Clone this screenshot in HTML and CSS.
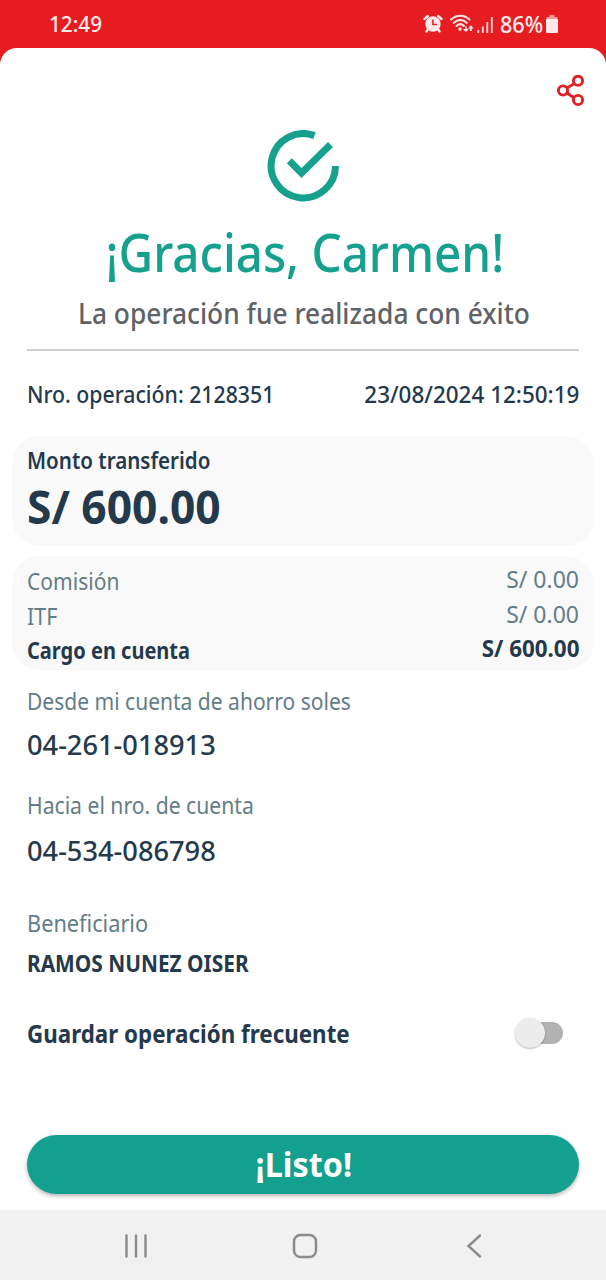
FILE: index.html
```
<!DOCTYPE html>
<html lang="es">
<head>
<meta charset="utf-8">
<title>Operación realizada</title>
<link rel="stylesheet" href="styles.css">
</head>
<body>
<div class="screen">
  <header class="status">
    <span class="text time">12:49</span>
    <div class="status-icons">
      <svg class="alarm" viewBox="0 0 20 20" width="20" height="20">
        <circle cx="10" cy="10" r="7.700" fill="#ffe9e9"/>
        <path d="M1.500 5L4.800 2M18.500 5L15.200 2M4.800 15.500L3.500 17.500M15.200 15.500L16.500 17.500" stroke="#ffe9e9" stroke-width="2.400" stroke-linecap="round" fill="none"/>
        <path d="M9.900 5.500v5h4" stroke="#e61c21" stroke-width="1.500" fill="none"/>
      </svg>
      <svg class="wifi" viewBox="0 0 24 20" width="24" height="20">
        <path d="M1 5.600C6.200 .300 14.300 .300 19.500 5.600M3.700 8.900C7.500 5 13 5 16.800 8.900M6.600 12C8.800 9.800 11.700 9.800 13.900 12" fill="none" stroke="#ffe9e9" stroke-width="2" stroke-linecap="round"/>
        <circle cx="10" cy="15" r="1.700" fill="#ffe9e9"/>
        <path d="M15 12.500h1.800v2.500h1.900L15.900 18.200 13 15H15zM19.900 17h1.800v-2.500h1.900L20.800 11.300 18 14.500h1.900z" fill="#ffe9e9"/>
      </svg>
      <svg class="signal" viewBox="0 0 17 18" width="17" height="18">
        <path d="M1.300 14v3M5.800 10.500V17M10.300 6V17M14.800 1V17" stroke="#ffe0e0" stroke-width="1.800" fill="none"/>
      </svg>
      <span class="text percent">86%</span>
      <svg class="battery" viewBox="0 0 12 18" width="12" height="18">
        <path d="M3.500 0h5v2h3v2.500H.500V2h3z" fill="#f39a9c"/>
        <rect y="4" width="12" height="14" rx="1" fill="#ffe9e9"/>
      </svg>
    </div>
  </header>

  <main class="sheet">
    <div class="toolbar">
      <svg class="share" viewBox="0 0 28 32" width="28" height="32" fill="none" stroke="#de2027" stroke-width="2.900">
        <path d="M9.700 13L17.200 8.700M10 18L17 22.700"/>
        <circle cx="6" cy="15.500" r="4.600"/><circle cx="21" cy="5.800" r="4.600"/><circle cx="21" cy="25" r="4.600"/>
      </svg>
    </div>
    <svg class="done" viewBox="0 0 72 72" width="72" height="72" fill="none" stroke="#16a08e" stroke-width="7">
      <path d="M47.500 5.600A32.200 32.200 0 1 0 68.500 36"/>
      <path d="M22.300 30.800L34.500 43L63.500 14.500"/>
    </svg>
    <h1 class="title"><span class="text">¡Gracias, Carmen!</span></h1>
    <p class="subtitle"><span class="text">La operación fue realizada con éxito</span></p>
    <hr class="divider">
    <div class="meta">
      <span class="text number">Nro. operación: 2128351</span>
      <span class="text date">23/08/2024 12:50:19</span>
    </div>

    <section class="card amount-card">
      <div class="label"><span class="text">Monto transferido</span></div>
      <div class="amount"><span class="text">S/ 600.00</span></div>
    </section>

    <section class="card charges">
      <div class="names">
        <span class="text commission">Comisión</span>
        <span class="text itf">ITF</span>
        <span class="text charge">Cargo en cuenta</span>
      </div>
      <div class="values">
        <span class="text">S/ 0.00</span>
        <span class="text">S/ 0.00</span>
        <span class="text total">S/ 600.00</span>
      </div>
    </section>

    <section class="field origin">
      <span class="text caption">Desde mi cuenta de ahorro soles</span>
      <span class="text account">04-261-018913</span>
    </section>
    <section class="field target">
      <span class="text caption">Hacia el nro. de cuenta</span>
      <span class="text account">04-534-086798</span>
    </section>
    <section class="field payee">
      <span class="text caption">Beneficiario</span>
      <span class="text name">RAMOS NUNEZ OISER</span>
    </section>

    <div class="save">
      <span class="text">Guardar operación frecuente</span>
      <span class="switch"><span class="knob"></span></span>
    </div>
    <button class="submit"><span class="text">¡Listo!</span></button>
  </main>

  <nav class="nav">
    <svg viewBox="0 0 24 26" width="24" height="26" stroke="#8b8b8b" stroke-width="2.400" stroke-linecap="round"><path d="M2.500 2.500v21M12 2.500v21M21.500 2.500v21"/></svg>
    <svg viewBox="0 0 26 26" width="26" height="26" fill="none" stroke="#8b8b8b" stroke-width="2.500"><rect x="2" y="2" width="22" height="22" rx="6.500"/></svg>
    <svg viewBox="0 0 24 26" width="24" height="26" fill="none" stroke="#8b8b8b" stroke-width="2.400" stroke-linecap="round"><path d="M18 2.500L6.500 13L18 23.500"/></svg>
  </nav>
</div>
</body>
</html>
```
FILE: styles.css
```
* { box-sizing: border-box; }
body { margin: 0; background: #e61c21; color: #25394c; font-family: "Noto Sans", sans-serif; font-weight: 500; }
h1, p { margin: 0; font-weight: inherit; }

.screen { width: 606px; height: 1280px; display: flex; flex-direction: column; background: #e61c21; overflow: hidden; }
.text { display: block; width: max-content; white-space: pre; transform: scaleX(var(--w, 1)); transform-origin: left; }

.status { height: 48px; flex: none; display: flex; justify-content: space-between; padding: 0 48px 0 49px; color: #ffecec; }
.time { font-size: 22.5px; line-height: 48px; --w: .92; }
.status-icons { display: flex; align-items: flex-start; }
.alarm { margin-top: 14px; }
.wifi { margin: 14px 0 0 7px; }
.signal { margin: 16px 0 0 3px; }
.percent { font-size: 23px; line-height: 48px; margin-left: 6px; --w: .94; }
.battery { margin: 15px 0 0 0; }

.sheet { height: 1162px; flex: none; display: flex; flex-direction: column; background: #fff; border-radius: 17px 17px 0 0; padding: 27px 12px 0; }
.toolbar { display: flex; justify-content: flex-end; height: 55px; padding-right: 9px; }
.done { align-self: center; }
.title { display: flex; justify-content: center; margin-top: 20px; padding-left: 4px; font-size: 52px; line-height: 60px; color: #16a08e; }
.title .text, .subtitle .text, .submit .text { transform-origin: center; }
.title .text { --w: .915; }
.subtitle { display: flex; justify-content: center; margin-top: 13px; padding-left: 1px; font-size: 29px; line-height: 36px; color: #616266; }
.subtitle .text { --w: .908; }
.divider { align-self: stretch; height: 2px; margin: 18px 15px 0; border: 0; background: #d0d0d0; }
.meta { display: flex; justify-content: space-between; margin-top: 28px; padding: 0 15px; font-size: 23px; line-height: 30px; }
.number { --w: .924; }
.date { --w: .976; transform-origin: right; }

.card { background: #f9f9f9; border-radius: 28px; padding-left: 15px; }
.amount-card { height: 110px; margin-top: 27px; padding-top: 9px; }
.label { font-size: 23px; line-height: 30px; font-weight: 600; }
.label .text { --w: .894; }
.amount { margin-top: 4px; font-size: 46px; line-height: 54px; font-weight: 700; }
.amount .text { --w: .964; }
.charges { display: flex; justify-content: space-between; height: 114px; margin-top: 10px; padding: 5px 15px 0; font-size: 23px; line-height: 34.7px; font-weight: 400; color: #637d88; }
.names { padding-top: 3px; }
.commission { --w: .915; }
.itf { --w: .93; }
.charge { --w: .87; font-weight: 700; color: #25394c; }
.values { display: flex; flex-direction: column; align-items: flex-end; padding-top: 1px; --w: 1; }
.values .text { transform-origin: right; }
.total { --w: .973; font-weight: 700; color: #25394c; }

.field { padding-left: 15px; }
.caption { font-size: 23px; line-height: 30px; font-weight: 400; color: #637d88; --w: .914; }
.account { font-size: 27px; line-height: 34px; --w: 1.008; }
.origin { margin-top: 16px; }
.origin .account { margin-top: 12px; }
.target { margin-top: 28px; }
.target .caption { --w: .919; }
.target .account { margin-top: 14px; }
.payee { margin-top: 40px; }
.payee .caption { --w: .945; }
.name { margin-top: 10px; font-size: 23px; line-height: 30px; font-weight: 700; --w: .907; }

.save { display: flex; justify-content: space-between; align-items: center; height: 34px; margin-top: 38px; padding: 0 31px 0 15px; font-size: 25px; line-height: 34px; font-weight: 700; }
.save .text { --w: .895; }
.switch { display: flex; align-items: center; width: 44px; height: 22px; border-radius: 11px; background: #b2b2b2; }
.knob { flex: none; width: 30px; height: 30px; margin-left: -4px; border-radius: 50%; background: #ececec; box-shadow: 0 1px 2px rgba(0,0,0,.28); }
.submit { display: flex; justify-content: center; height: 59px; margin: 85px 15px 0; padding: 0; border: 0; border-radius: 30px; background: #14a08e; box-shadow: 0 2px 4px rgba(0,0,0,.3); color: #fff; font: 700 34px/59px "Noto Sans", sans-serif; }
.submit .text { --w: .95; position: relative; left: 1px; }

.nav { height: 70px; flex: none; display: flex; justify-content: space-between; align-items: center; background: #f1f1f1; padding: 2px 120px 0 124px; }
```
